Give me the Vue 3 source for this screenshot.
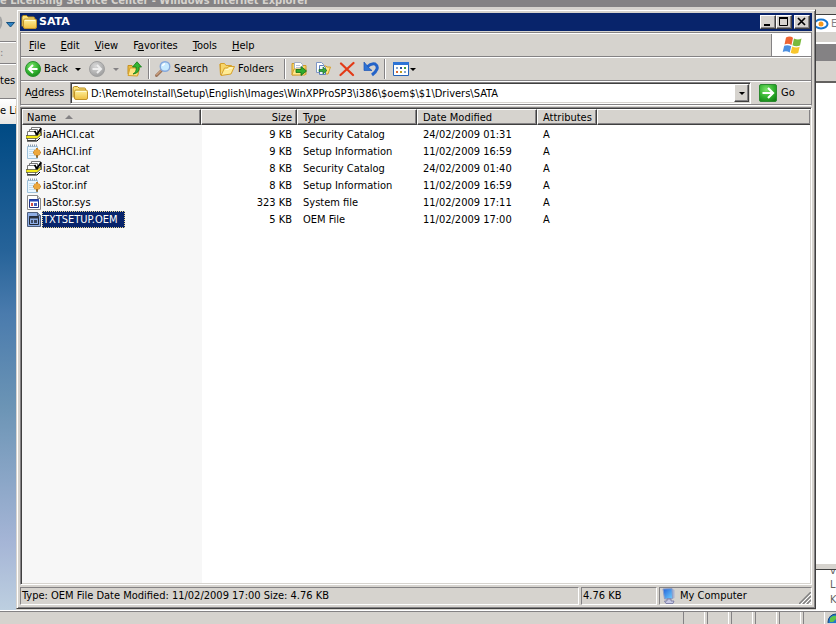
<script setup>
import { ref } from "vue";

const menus = [
  ["", "F", "ile"],
  ["", "E", "dit"],
  ["", "V", "iew"],
  ["F", "a", "vorites"],
  ["", "T", "ools"],
  ["", "H", "elp"],
];

const files = [
  { name: "iaAHCI.cat", size: "9 KB", type: "Security Catalog", date: "24/02/2009 01:31", icon: "cat" },
  { name: "iaAHCI.inf", size: "9 KB", type: "Setup Information", date: "11/02/2009 16:59", icon: "inf" },
  { name: "iaStor.cat", size: "8 KB", type: "Security Catalog", date: "24/02/2009 01:40", icon: "cat" },
  { name: "iaStor.inf", size: "8 KB", type: "Setup Information", date: "11/02/2009 16:59", icon: "inf" },
  { name: "IaStor.sys", size: "323 KB", type: "System file", date: "11/02/2009 17:11", icon: "sys" },
  { name: "TXTSETUP.OEM", size: "5 KB", type: "OEM File", date: "11/02/2009 17:00", icon: "sys" },
];

const path = ref("D:\\RemoteInstall\\Setup\\English\\Images\\WinXPProSP3\\i386\\$oem$\\$1\\Drivers\\SATA");
const selected = ref("TXTSETUP.OEM");
</script>

<template>
  <div class="desktop">
    <!-- icon sprites -->
    <svg class="sprites" aria-hidden="true">
      <defs>
        <linearGradient id="gold" x1="0" y1="0" x2="0" y2="1">
          <stop offset="0" stop-color="#fff3a0" />
          <stop offset="1" stop-color="#f0c040" />
        </linearGradient>
        <radialGradient id="green" cx=".4" cy=".3" r=".8">
          <stop offset="0" stop-color="#7be36a" />
          <stop offset=".6" stop-color="#2eae2c" />
          <stop offset="1" stop-color="#128014" />
        </radialGradient>
        <radialGradient id="silver" cx=".4" cy=".3" r=".8">
          <stop offset="0" stop-color="#d8d8d8" />
          <stop offset="1" stop-color="#969696" />
        </radialGradient>
        <linearGradient id="screen" x1="0" y1="0" x2="1" y2="1">
          <stop offset="0" stop-color="#2060d8" />
          <stop offset="1" stop-color="#70d0ff" />
        </linearGradient>
      </defs>
      <symbol id="folder" viewBox="0 0 16 16">
        <path d="M1 12.500V3.500q0-2 1.500-2h3L7 3h5.500q1 0 1 1v2" fill="#fbe27a" stroke="#b58a1c" />
        <path d="M4 14.500q-1.500 0-1.500-1.500V6.500q0-1.500 1.500-1.500h10q1.500 0 1.500 1.500V13q0 1.500-1.500 1.500z" fill="url(#gold)" stroke="#c0922a" />
        <path d="M4 6.500h10" stroke="#fffbd5" />
      </symbol>
      <symbol id="folders" viewBox="0 0 16 16">
        <path d="M1.500 12V2.500h4l1.500 2h5.500V7" fill="#f8d66a" stroke="#d5a02c" />
        <path d="M1.500 14L.8 3" stroke="#d5a02c" />
        <path d="M2 14.500L5.500 7h3l1-1.500h6L12 13z" fill="#ffec95" stroke="#d5a02c" />
        <path d="M6.500 8.500h3l1-1.500h3" fill="none" stroke="#fffbd8" />
      </symbol>
      <symbol id="back" viewBox="0 0 16 16">
        <circle cx="8" cy="8" r="7.500" fill="url(#green)" stroke="#2a9130" />
        <path d="M12.500 8H4.500M8 4L4 8l4 4" fill="none" stroke="#fff" stroke-width="2" />
      </symbol>
      <symbol id="forward" viewBox="0 0 16 16">
        <circle cx="8" cy="8" r="7.500" fill="url(#silver)" stroke="#a0a0a0" />
        <path d="M3.500 8h8M8 4l4 4-4 4" fill="none" stroke="#eee" stroke-width="2" />
      </symbol>
      <symbol id="up" viewBox="0 0 16 16">
        <path d="M1 13V4.500h4l1 1h5v8z" fill="#e8bc45" stroke="#c58f20" />
        <path d="M1 14.500L3 7h9.500l-2 8z" fill="#ffe481" stroke="#d5a02c" />
        <path d="M6 13q4-2 3-7H5.500L10 .8 14.500 6H12q1 6-6 7z" fill="#34b632" stroke="#147a18" stroke-width=".8" />
      </symbol>
      <symbol id="search" viewBox="0 0 16 16">
        <path d="M1.500 14.500L6.500 9.500" stroke="#9b735a" stroke-width="3" stroke-linecap="round" />
        <path d="M1.500 14L6 9.500" stroke="#e9bd91" stroke-linecap="round" />
        <circle cx="10" cy="5.500" r="4.800" fill="#c7eaff" stroke="#85a8dc" stroke-width="1.400" />
        <path d="M7.500 5q.5-2 2.500-2.300" fill="none" stroke="#fff" stroke-width="1.500" />
      </symbol>
      <symbol id="move" viewBox="0 0 16 16">
        <path d="M1 14V2.500h4l1 2h9v9z" fill="#f7d361" stroke="#cd9b2c" />
        <path d="M3.500 1.500h6l2 2v9h-8z" fill="#fff" stroke="#a3afc6" />
        <path d="M5 4.500h4M5 6.500h5" stroke="#b6c1d6" />
        <path d="M1 14L3 8h12l-1 6z" fill="#ffe88a" stroke="#d3a236" />
        <path d="M5 8.500h5V5.500L15.500 10l-5.500 4.500v-3H5z" fill="#2ead2d" stroke="#116a15" stroke-width=".8" />
      </symbol>
      <symbol id="copy" viewBox="0 0 16 16">
        <path d="M8 5h3l1 1h3.500L13 13H8z" fill="#ffe481" stroke="#d5a02c" />
        <path d="M1.500 1.500h5l2 2v8h-7z" fill="#fff" stroke="#7e96c6" />
        <path d="M4.500 4.500h4l2 2v7h-6z" fill="#eef5ff" stroke="#5f7ebc" />
        <path d="M4 8.500h4V6l4 3.500L8 13v-2.500H4z" fill="#38a93b" stroke="#176a2a" stroke-width=".7" />
      </symbol>
      <symbol id="delete" viewBox="0 0 16 16">
        <path d="M2 2.500L14 14M14.500 2L1.500 14" stroke="#e33a16" stroke-width="2.200" stroke-linecap="round" />
      </symbol>
      <symbol id="undo" viewBox="0 0 16 16">
        <path d="M4 6q4-4 8-3 3 2 2 5-1 3-5 6" fill="none" stroke="#2463c8" stroke-width="3" />
        <path d="M1 1v8.500h8L6 7 4 4.500z" fill="#2d73d6" stroke="#1d55b4" stroke-width=".7" />
      </symbol>
      <symbol id="views" viewBox="0 0 16 16">
        <path d="M.5 1.500h15v13H.5z" fill="#fff" stroke="#2462b8" />
        <path d="M0 2.500h16" stroke="#2c73d6" stroke-width="3" />
        <path d="M3 6h2v2H3zM11 10h2v2h-2z" fill="#82a4cf" />
        <path d="M7 6h2v2H7z" fill="#2a4fa3" />
        <path d="M11 6h2v2h-2z" fill="#3e9f3c" />
        <path d="M3 10h2v2H3z" fill="#d86a34" />
        <path d="M7 10h2v2H7z" fill="#bd9c20" />
      </symbol>
      <symbol id="go" viewBox="0 0 18 18">
        <rect x=".5" y=".5" width="17" height="17" rx="1.500" fill="url(#green)" stroke="#2c8a30" />
        <path d="M3.500 9h10M9 4l5 5-5 5" fill="none" stroke="#fff" stroke-width="2.200" />
      </symbol>
      <symbol id="flag" viewBox="0 0 20 18">
        <path d="M4 1.500q4-2 7 .3L9.500 9Q6 7 2.500 8.500z" fill="#ee6432" />
        <path d="M12 2.500q4 2 7.500 0L18 9.500q-4 1.500-7.500-.3z" fill="#79b93c" />
        <path d="M2.200 9.700Q6 8.500 9.200 10.300L7.700 16.500Q4.500 14.500.7 16z" fill="#4c8fe0" />
        <path d="M10.200 10.500q4 2 7.500.3L16.200 17q-4 1.800-7.500-.3z" fill="#f8c62c" />
      </symbol>
      <symbol id="cat" viewBox="0 0 16 16">
        <path d="M5.500 .500h9v8h-9z" fill="#fff" stroke="#777" />
        <path d="M15 1v8" stroke="#000" />
        <path d="M3.500 2.500h8v8h-8z" fill="#fff" stroke="#777" />
        <path d="M1.500 4.500h8v9h-8z" fill="#fff" stroke="#777" />
        <path d="M1 14h10l3-3" fill="none" stroke="#000" />
        <path d="M0 8.500h11l4-3v2.500L11 11.500H0z" fill="#f2e818" stroke="#444" stroke-width=".7" />
        <path d="M8.500 4l2.500 3.500 4-6" fill="none" stroke="#000" stroke-width="1.800" />
      </symbol>
      <symbol id="inf" viewBox="0 0 16 16">
        <path d="M1.500 2.500h10v12h-10z" fill="#eaf6ff" stroke="#9fc2dc" />
        <path d="M2 1.500h10" stroke="#8b9aac" stroke-width="2" stroke-dasharray="1 1" />
        <path d="M3 5.500h6M3 7.500h5M3 9.500h5M3 11.500h6" stroke="#c4deee" />
        <path d="M11 4v9M7 8.500h8M8.500 6l5 5M13.500 6l-5 5" stroke="#c68428" stroke-width="2" />
        <circle cx="11" cy="8.500" r="3" fill="#eda83c" />
        <path d="M11 11v3" stroke="#86662c" stroke-width="1.500" />
      </symbol>
      <symbol id="sys" viewBox="0 0 16 16">
        <path d="M1.500.5h10l3 3v11h-13z" fill="#fff" stroke="#8a8a8a" />
        <path d="M11.500.5v3h3" fill="#ddd" stroke="#8a8a8a" />
        <path d="M3.500 4.500h9v8h-9z" fill="#fff" stroke="#23327c" />
        <path d="M3 5.500h10" stroke="#2445b4" stroke-width="2" />
        <path d="M5 8h2v3H5z" fill="#d34b40" />
        <path d="M8 8h3v3H8z" fill="#4762c1" />
      </symbol>
      <symbol id="computer" viewBox="0 0 16 16">
        <path d="M11 .5l2.500 1.500v8L11 11z" fill="#aab3d0" />
        <path d="M2 1l9-.5.5 10-8 .5z" fill="url(#screen)" stroke="#8a9cc8" />
        <path d="M6 11h4v2h3l-1 2.500H5L3.500 13H6z" fill="#c8c9e4" stroke="#6e719d" stroke-width=".8" />
      </symbol>
    </svg>

    <!-- browser window behind -->
    <div class="browser">
      <div class="browser-title"><span>e Licensing Service Center - Windows Internet Explorer</span></div>
      <div class="browser-body">
        <div class="left-edge">
          <div class="nav-edge">
            <svg width="16" height="34" viewBox="0 0 16 34">
              <path d="M0 10q3 7-1 12" fill="none" stroke="#a5a5a5" stroke-width="2" />
              <path d="M6.500 15.500h8L10.500 20z" fill="#2f83c5" stroke="#17517f" />
            </svg>
          </div>
          <div class="menu-edge">:</div>
          <div class="fav-edge">tes</div>
          <div class="tab-edge">e Li</div>
          <div class="page-edge"></div>
        </div>
        <div class="right-edge">
          <div class="search-edge">
            <svg width="15" height="14" viewBox="0 0 15 14">
              <ellipse cx="5" cy="7" rx="6.500" ry="4.500" fill="#fff" stroke="#1775cf" stroke-width="2" />
              <circle cx="5" cy="7" r="2.500" fill="#f79a1c" />
            </svg>
            <span>E</span>
          </div>
          <div class="band-edge"></div>
          <div class="tool-edge"></div>
          <div class="blank-edge"></div>
          <div class="text-edge"><span>v</span><span>L</span><span>K</span></div>
        </div>
      </div>
      <div class="browser-status">
        <i v-for="n in 6" :key="n"></i>
        <svg width="9" height="12" viewBox="0 0 9 12">
          <circle cx="9" cy="11" r="8" fill="#2377c9" stroke="#164680" />
          <path d="M3 7q3-3 6-2v3l-3 3H3z" fill="#5fc348" />
        </svg>
      </div>
    </div>

    <main class="window">
      <header class="titlebar">
        <svg width="16" height="16"><use href="#folder" /></svg>
        <h1>SATA</h1>
        <button class="caption" aria-label="Minimize">
          <svg width="12" height="10"><path d="M2 7h6v2H2z" /></svg>
        </button>
        <button class="caption" aria-label="Maximize">
          <svg width="12" height="10"><path d="M1.500 1v7.500h8V1M1 1h9" fill="none" stroke="#000" /><path d="M1 0h9v2H1z" /></svg>
        </button>
        <button class="caption close" aria-label="Close">
          <svg width="12" height="10"><path d="M2 1l7 7M9 1L2 8" stroke="#000" stroke-width="1.700" /></svg>
        </button>
      </header>

      <div class="rebar">
        <nav class="bar menubar">
          <button v-for="m in menus" :key="m[2]"><span>{{ m[0] }}<u>{{ m[1] }}</u>{{ m[2] }}</span></button>
          <div class="brand"><svg width="20" height="18"><use href="#flag" /></svg></div>
        </nav>

        <div class="bar toolbar">
          <button class="labelled back"><svg width="16" height="16"><use href="#back" /></svg>Back</button>
          <button class="drop" aria-label="Back history"><i class="arrow"></i></button>
          <button aria-label="Forward" disabled><svg width="16" height="16"><use href="#forward" /></svg></button>
          <button class="drop" aria-label="Forward history" disabled><i class="arrow dim"></i></button>
          <button aria-label="Up"><svg width="16" height="16"><use href="#up" /></svg></button>
          <span class="sep"></span>
          <button class="labelled search"><svg width="16" height="16"><use href="#search" /></svg>Search</button>
          <button class="labelled folders"><svg width="16" height="16"><use href="#folders" /></svg>Folders</button>
          <span class="sep"></span>
          <button aria-label="Move To"><svg width="16" height="16"><use href="#move" /></svg></button>
          <button aria-label="Copy To"><svg width="16" height="16"><use href="#copy" /></svg></button>
          <button aria-label="Delete"><svg width="16" height="16"><use href="#delete" /></svg></button>
          <button aria-label="Undo"><svg width="16" height="16"><use href="#undo" /></svg></button>
          <span class="sep"></span>
          <button class="views" aria-label="Views"><svg width="16" height="16"><use href="#views" /></svg><i class="arrow"></i></button>
        </div>

        <form class="bar addressbar" @submit.prevent>
          <label for="address">A<u>d</u>dress</label>
          <div class="combo">
            <svg width="16" height="16"><use href="#folder" /></svg>
            <input id="address" v-model="path" type="text" spellcheck="false" />
            <button type="button" class="combo-drop" aria-label="Show addresses"><i class="arrow"></i></button>
          </div>
          <button class="go"><svg width="18" height="18"><use href="#go" /></svg>Go</button>
        </form>
      </div>

      <section class="pane">
        <table>
          <colgroup>
            <col class="c-name" /><col class="c-size" /><col class="c-type" />
            <col class="c-date" /><col class="c-attr" /><col />
          </colgroup>
          <thead>
            <tr>
              <th class="first"><div>Name <i class="sorted"></i></div></th>
              <th class="num"><div>Size</div></th>
              <th><div>Type</div></th>
              <th><div>Date Modified</div></th>
              <th><div>Attributes</div></th>
              <th class="rest"><div></div></th>
            </tr>
          </thead>
          <tbody>
            <tr v-for="f in files" :key="f.name" :class="{ selected: f.name === selected }" @click="selected = f.name">
              <td class="name">
                <div>
                  <svg width="16" height="16"><use :href="'#' + f.icon" /></svg>
                  <span>{{ f.name }}</span>
                </div>
              </td>
              <td class="num">{{ f.size }}</td>
              <td>{{ f.type }}</td>
              <td>{{ f.date }}</td>
              <td>A</td>
              <td></td>
            </tr>
          </tbody>
        </table>
      </section>

      <footer class="statusbar">
        <div class="info">Type: OEM File Date Modified: 11/02/2009 17:00 Size: 4.76 KB</div>
        <div class="size">4.76 KB</div>
        <div class="zone">
          <svg width="16" height="16"><use href="#computer" /></svg>My Computer
          <svg class="grip" width="12" height="12">
            <path d="M0 12L12 0M4 12l8-8M8 12l4-4" stroke="#808080" stroke-width="1.500" />
            <path d="M2 12L12 2M6 12l6-6M10 12l2-2" stroke="#fff" />
          </svg>
        </div>
      </footer>
    </main>
  </div>
</template>

<style>
body {
  margin: 0;
}
</style>

<style scoped>
.desktop {
  position: relative;
  height: 100vh;
  overflow: hidden;
  background: #d6d3ce;
  font: 11px/14px "DejaVu Sans Condensed", "DejaVu Sans", sans-serif;
  color: #000;
}

.sprites {
  position: absolute;
  width: 0;
  height: 0;
}

svg {
  display: block;
  flex: none;
}

button {
  display: flex;
  align-items: center;
  margin: 0;
  padding: 0;
  border: 0;
  background: none;
  font: inherit;
  color: inherit;
}

/* browser behind */
.browser {
  display: flex;
  flex-direction: column;
  height: 100%;
}

.browser-title {
  display: flex;
  align-items: flex-end;
  height: 7px;
  overflow: hidden;
  background: #848284;
  color: #d6d3ce;
  font-weight: bold;
  white-space: nowrap;
}

.browser-title span {
  line-height: 12px;
}

.browser-body {
  display: flex;
  justify-content: space-between;
  flex: 1;
  min-height: 0;
}

.left-edge,
.right-edge {
  display: flex;
  flex-direction: column;
  width: 16px;
  overflow: hidden;
  white-space: nowrap;
}

.right-edge {
  width: 20px;
}

.nav-edge {
  height: 34px;
  border-bottom: 1px solid #848284;
}

.menu-edge {
  height: 20px;
  border-top: 1px solid #fff;
  border-bottom: 1px solid #848284;
  line-height: 20px;
  color: #848284;
}

.fav-edge {
  height: 33px;
  border-top: 1px solid #fff;
  border-bottom: 1px solid #848284;
  line-height: 32px;
}

.tab-edge {
  height: 25px;
  background: linear-gradient(#fff, #e7e6e3);
  line-height: 24px;
}

.page-edge {
  flex: 1;
  background: linear-gradient(#004a84, #266399 26%, #4a7bad 39%, #6b94b5 58%, #a5b5d6 86%, #bdcfe0);
}

.search-edge {
  display: flex;
  align-items: center;
  height: 17px;
  margin-top: 7px;
  border-top: 1px solid #404040;
  border-bottom: 1px solid #d6d3ce;
  background: #fff;
  color: #848284;
}

.band-edge {
  height: 17px;
  margin-top: 9px;
  border-top: 2px solid #fff;
  background: #848284;
}

.tool-edge {
  height: 20px;
  border-bottom: 2px solid #63615f;
}

.blank-edge {
  flex: 1;
  border-bottom: 1px solid #d6d3ce;
  background: #fff;
}

.text-edge {
  display: flex;
  flex-direction: column;
  height: 40px;
  margin-top: 4px;
  padding-left: 14px;
  overflow: hidden;
  border-top: 1px solid #404040;
  background: #fff;
  color: #63615f;
  line-height: 15px;
}

.text-edge span:first-child {
  height: 7px;
  line-height: 2px;
}

.browser-status {
  display: flex;
  justify-content: flex-end;
  gap: 2px;
  height: 13px;
  border-top: 1px solid #fff;
  box-shadow: inset 0 1px #848284;
}

.browser-status i {
  width: 20px;
  margin-top: 1px;
  border-left: 1px solid #848284;
  border-right: 1px solid #fff;
}

/* explorer window */
.window {
  position: absolute;
  inset: 9px 20px 15px 16px;
  box-sizing: border-box;
  display: flex;
  flex-direction: column;
  padding: 3px;
  border: 1px solid;
  border-color: #d6d3ce #404040 #404040 #d6d3ce;
  background: #d6d3ce;
  box-shadow: inset 1px 1px #fff, inset -1px -1px #848284;
}

.titlebar {
  display: flex;
  align-items: center;
  height: 18px;
  padding: 0 2px 0 1px;
  background: #08246b;
  color: #fff;
}

.titlebar h1 {
  flex: 1;
  margin: 0 0 0 2px;
  font-family: "DejaVu Sans", sans-serif;
  font-size: 11px;
}

.caption {
  box-sizing: border-box;
  width: 16px;
  height: 14px;
  padding: 1px;
  border: 1px solid;
  border-color: #fff #404040 #404040 #fff;
  background: #d6d3ce;
  box-shadow: inset -1px -1px #848284;
}

.close {
  margin-left: 2px;
}

.rebar {
  margin: 1px 0;
  border: 1px solid #848284;
  border-bottom-color: #fff;
}

.bar {
  box-sizing: border-box;
  display: flex;
  align-items: center;
  height: 24px;
  border-top: 1px solid #fff;
  border-bottom: 1px solid #848284;
}

.menubar {
  padding-left: 1px;
}

.menubar button {
  padding: 2px 8px 0 7px;
}

.brand {
  display: flex;
  align-items: center;
  justify-content: center;
  align-self: stretch;
  width: 39px;
  margin-left: auto;
  border-left: 1px solid #848284;
  background: #fff;
}

.toolbar {
  padding-left: 4px;
}

.toolbar button {
  margin-right: 8px;
}

.toolbar button:has(+ .sep) {
  margin-right: 5px;
}

.toolbar .labelled {
  gap: 3px;
}

.toolbar .back {
  width: 50px;
  margin: 0;
}

.toolbar .drop {
  width: 14px;
  margin: 0;
}

.toolbar .search {
  width: 56px;
}

.toolbar .folders {
  width: 60px;
}

.toolbar .views {
  gap: 1px;
  margin-left: 2px;
}

.arrow {
  width: 0;
  border: 3px solid transparent;
  border-top-color: #000;
  border-bottom: 0;
}

.arrow.dim {
  border-top-color: #848284;
}

.sep {
  width: 0;
  height: 20px;
  margin-right: 5px;
  border-left: 1px solid #848284;
  border-right: 1px solid #fff;
}

.addressbar label {
  width: 45px;
  padding-left: 4px;
}

.combo {
  box-sizing: border-box;
  display: flex;
  align-items: center;
  flex: 1;
  height: 22px;
  padding-left: 1px;
  border: 1px solid;
  border-color: #848284 #fff #fff #848284;
  background: #fff;
  box-shadow: inset 1px 1px #404040, inset -1px -1px #d6d3ce;
}

.combo input {
  flex: 1;
  min-width: 0;
  padding: 2px 0 0 3px;
  border: 0;
  outline: 0;
  background: none;
  font: inherit;
  color: inherit;
}

.combo-drop {
  box-sizing: border-box;
  justify-content: center;
  width: 15px;
  height: 18px;
  margin-right: 1px;
  border: 1px solid;
  border-color: #fff #404040 #404040 #fff;
  background: #d6d3ce;
  box-shadow: inset -1px -1px #848284;
}

.go {
  gap: 4px;
  width: 52px;
  margin-left: 8px;
}

/* file list */
.pane {
  flex: 1;
  min-height: 0;
  overflow: hidden;
  padding: 1px;
  border: 1px solid;
  border-color: #848284 #fff #fff #848284;
  background: linear-gradient(#f7f7f7, #f7f7f7) 0 0 / 180px 100% no-repeat content-box #fff;
  box-shadow: inset 1px 1px #404040, inset -1px -1px #d6d3ce;
}

table {
  width: 100%;
  table-layout: fixed;
  border-spacing: 0;
}

.c-name {
  width: 179px;
}

.c-size {
  width: 96px;
}

.c-type,
.c-date {
  width: 120px;
}

.c-attr {
  width: 60px;
}

th {
  padding: 0 0 1px;
  font-weight: normal;
  text-align: left;
}

th div {
  box-sizing: border-box;
  height: 16px;
  padding: 0 5px;
  border: 1px solid;
  border-color: #fff #404040 #404040 #fff;
  background: #d6d3ce;
  box-shadow: inset -1px -1px #848284;
  line-height: 15px;
}

th.first div,
th.num div {
  padding: 0 4px;
}

th.rest div {
  border-right: 0;
}

.sorted {
  display: inline-block;
  margin: 0 0 2px 6px;
  border: 4px solid transparent;
  border-top: 0;
  border-bottom-color: #848284;
}

td {
  height: 17px;
  padding: 0 6px;
  line-height: 17px;
  white-space: nowrap;
}

.num {
  text-align: right;
}

td.num {
  padding-right: 5px;
}

td.name {
  padding: 0 4px;
}

.name div {
  display: flex;
  align-items: center;
}

.name span {
  padding: 0 1px;
  line-height: 17px;
}

.selected .name span {
  padding: 0 7px 0 0;
  border: 1px dotted #e8d48c;
  background: #08246b;
  color: #fff;
  line-height: 15px;
}

.selected svg {
  filter: brightness(.55) sepia(1) hue-rotate(180deg) saturate(1.5);
}

/* status bar */
.statusbar {
  display: flex;
  gap: 2px;
  margin-top: 2px;
}

.statusbar div {
  box-sizing: border-box;
  display: flex;
  align-items: center;
  height: 18px;
  padding-left: 1px;
  border: 1px solid;
  border-color: #848284 #fff #fff #848284;
  white-space: nowrap;
}

.statusbar .info {
  flex: 1;
}

.statusbar .size {
  width: 76px;
}

.statusbar .zone {
  gap: 3px;
  width: 153px;
}

.grip {
  align-self: flex-end;
  margin-left: auto;
}
</style>
